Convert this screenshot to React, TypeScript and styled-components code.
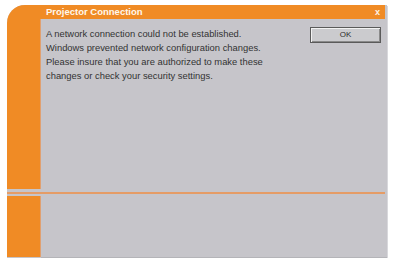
import React from "react";
import styled, { createGlobalStyle } from "styled-components";

const Global = createGlobalStyle`
  html, body { margin: 0; padding: 0; background: #ffffff; }
  body { font-family: "Liberation Sans", Arial, sans-serif; }
`;

const ORANGE = "#f08b25";
const GREY = "#c6c5ca";

const Window = styled.div`
  margin: 5px 0 0 7px;
  width: 380px;
  height: 253px;
  display: grid;
  grid-template-columns: 34px 1fr;
  grid-template-rows: 14px 170px 7px 1fr;
  background: ${GREY};
  border-top-left-radius: 18px;
  overflow: hidden;
  box-shadow: 1px 1px 0 #d8d8dc;
`;

const TitleBar = styled.div`
  grid-column: 1 / -1;
  background: ${ORANGE};
  display: flex;
  align-items: center;
  justify-content: space-between;
  padding: 0 5px 0 39px;
  margin-right: 2px;
`;

const Title = styled.span`
  color: #fff8ec;
  font-weight: bold;
  font-size: 9.5px;
  line-height: 14px;
`;

const Close = styled.span`
  color: #fff3e6;
  font-weight: bold;
  font-size: 9px;
  line-height: 14px;
`;

const Side = styled.div`
  background: ${ORANGE};
  border-right: 1px solid #e0a070;
`;

const Content = styled.div`
  display: flex;
  justify-content: space-between;
  align-items: flex-start;
  padding: 8px 6px 0 5px;
`;

const Message = styled.p`
  margin: 0;
  color: #333333;
  font-size: 9.4px;
  line-height: 14px;
`;

const OkButton = styled.button`
  width: 71px;
  height: 16px;
  margin: 0;
  padding: 0;
  background: #cbcbce;
  border: 1px solid #5a5a5a;
  box-shadow: inset 1px 1px 0 #f2f2f2, inset -1px -1px 0 #8a8a8a;
  color: #2b2b2b;
  font-family: "Liberation Sans", Arial, sans-serif;
  font-size: 8px;
  line-height: 14px;
`;

const Divider = styled.div`
  grid-column: 1 / -1;
  display: flex;
  align-items: center;
  margin-right: 2px;
  &::after {
    content: "";
    flex: 1;
    height: 2px;
    background: #e59c66;
  }
`;

const LowerContent = styled.div`
  border-bottom: 1px solid #b4b4b8;
`;

const LowerSide = styled(Side)`
  margin-bottom: 1px;
`;

export default function App() {
  return (
    <>
      <Global />
      <Window>
        <TitleBar>
          <Title>Projector Connection</Title>
          <Close>x</Close>
        </TitleBar>
        <Side />
        <Content>
          <Message>
            A network connection could not be established.
            <br />
            Windows prevented network configuration changes.
            <br />
            Please insure that you are authorized to make these
            <br />
            changes or check your security settings.
          </Message>
          <OkButton>OK</OkButton>
        </Content>
        <Divider />
        <LowerSide />
        <LowerContent />
      </Window>
    </>
  );
}
